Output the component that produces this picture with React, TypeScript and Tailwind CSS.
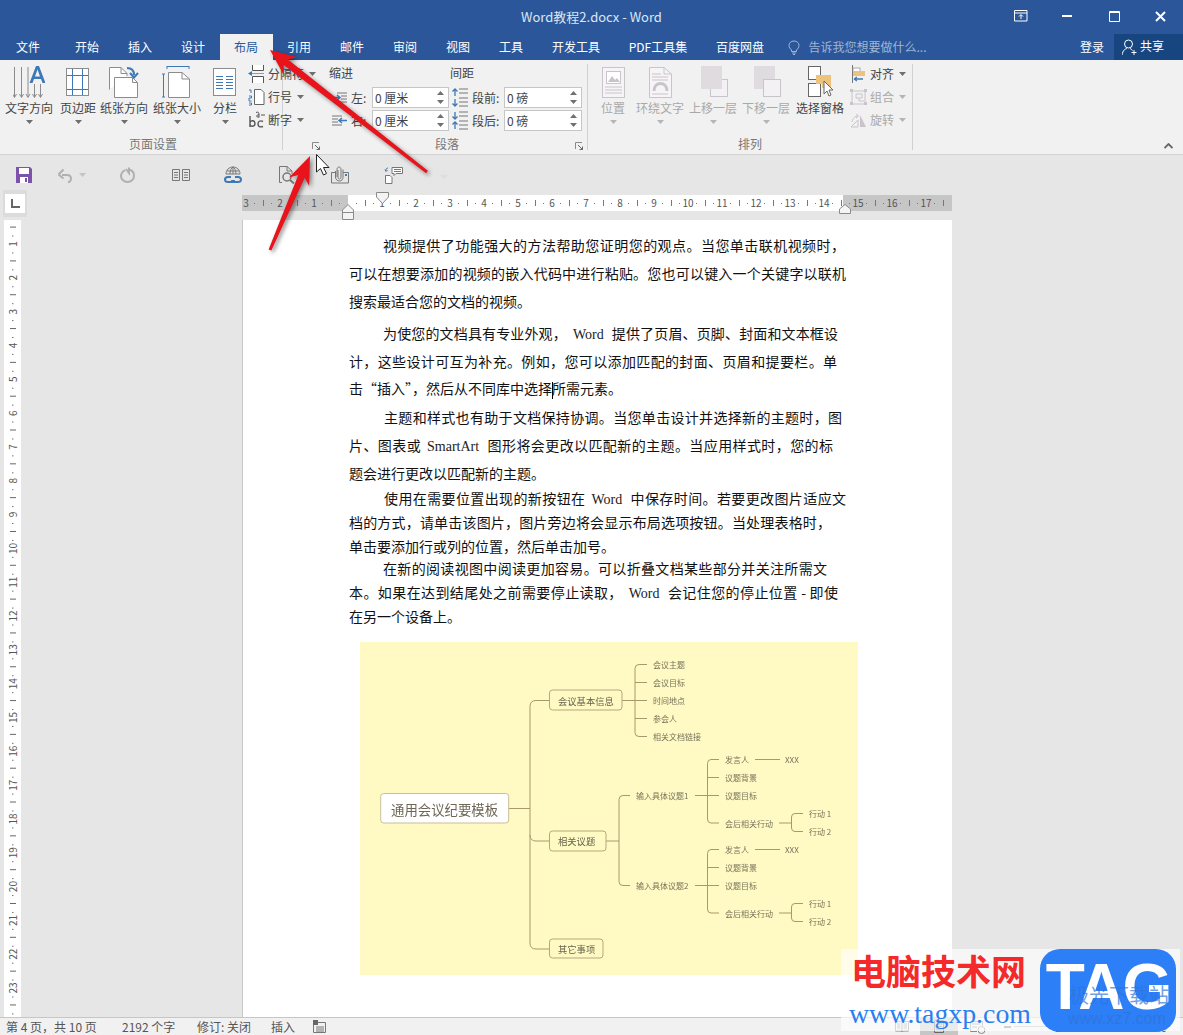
import React from "react";

const G = "#8c8c8c";
const B = "#3f79b5";
const D = "#c9c4c9";

function Caret({ c = "#6f6f6f" }: { c?: string }) {
  return (
    <svg width="7" height="4" viewBox="0 0 7 4" className="shrink-0">
      <path d="M0 0H7L3.5 4Z" fill={c} />
    </svg>
  );
}

function LargeBtn({ label, w, icon, off }: { label: string; w: string; icon: React.ReactNode; off?: boolean }) {
  return (
    <div className={`flex flex-col items-center shrink-0 pt-[2px] ${w}`}>
      <div className="w-[32px] h-[32px]">{icon}</div>
      <div className={`mt-[2px] h-[16px] leading-[16px] text-[12px] whitespace-nowrap ${off ? "text-[#a9a9a9]" : "text-[#444444]"}`}>{label}</div>
      <div className="mt-[4px]"><Caret c={off ? "#b5b5b5" : "#6f6f6f"} /></div>
    </div>
  );
}

function SmallBtn({ label, icon, off }: { label: string; icon: React.ReactNode; off?: boolean }) {
  return (
    <div className="flex items-center h-[20px] whitespace-nowrap">
      <div className="w-[17px] h-[18px]">{icon}</div>
      <span className={`ml-[3px] text-[12px] leading-[20px] ${off ? "text-[#a9a9a9]" : "text-[#444444]"}`}>{label}</span>
      <span className="ml-[5px]"><Caret c={off ? "#b5b5b5" : "#6f6f6f"} /></span>
    </div>
  );
}

function Launcher() {
  return (
    <svg width="8" height="8" viewBox="0 0 8 8">
      <path d="M0.5 7V0.5H7" fill="none" stroke="#8a8a8a" />
      <path d="M3 3L7.5 7.5M7.5 4.5V7.5H4.5" fill="none" stroke="#6a6a6a" />
    </svg>
  );
}

function Spin({ value, w }: { value: string; w: string }) {
  return (
    <div className={`h-[21px] bg-white border border-[#c6c6c6] flex items-center justify-between pl-[2px] pr-[4px] ${w}`}>
      <span className="text-[12px] text-[#444444]">{value}</span>
      <div className="flex flex-col gap-[5px]">
        <svg width="7" height="4" viewBox="0 0 7 4"><path d="M0 4H7L3.5 0Z" fill="#707070" /></svg>
        <Caret c="#707070" />
      </div>
    </div>
  );
}

const IconTextDir = (
  <svg viewBox="0 0 32 32" width="32" height="32">
    <g stroke={G} fill="none">
      <path d="M1.5 1V31M8.5 1V31M15 1V31M21.5 18V31M27.5 18V31" />
      <path d="M-.5 28L1.5 31.5L3.5 28M6.5 28L8.5 31.5L10.5 28M13 28L15 31.5L17 28M19.5 28L21.5 31.5L23.5 28M25.5 28L27.5 31.5L29.5 28" />
    </g>
    <path d="M16.5 17L23 0H26L32.5 17H29.5L28 13H21L19.5 17ZM22 10.5H27L24.5 3.5Z" fill={B} />
  </svg>
);
const IconMargins = (
  <svg viewBox="0 0 32 32" width="32" height="32">
    <rect x="4.5" y="2.5" width="22" height="27" fill="#fff" stroke={G} />
    <path d="M10.5 3V29M20.5 3V29M5 9.5H26M5 23.5H26" stroke={B} fill="none" />
  </svg>
);
const IconOrient = (
  <svg viewBox="0 0 32 32" width="32" height="32">
    <path d="M1.5 23.5V1.5H13L19 7.5V10" fill="#fff" stroke={G} />
    <path d="M13 1.5V7.5H19" fill="none" stroke={G} />
    <path d="M6.5 31.5V11.5H24.5L29.5 16.5V31.5Z" fill="#fff" stroke={G} />
    <path d="M24.5 11.5V16.5H29.5" fill="none" stroke={G} />
    <path d="M19 2C23 2 26 4 26 9" fill="none" stroke={B} strokeWidth="2" />
    <path d="M22 7L26 11.5L30 7" fill="none" stroke={B} strokeWidth="2" />
  </svg>
);
const IconSize = (
  <svg viewBox="0 0 32 32" width="32" height="32">
    <path d="M4 .5H26M4 0V3M26 0V3M.5 8V31M-1 8H2M-1 31H2" transform="translate(2 0)" stroke={B} fill="none" />
    <path d="M7.5 31.5V6.5H21L28.5 13V31.5Z" fill="#fff" stroke={G} />
    <path d="M21 6.5V13H28.5" fill="none" stroke={G} />
  </svg>
);
const IconCols = (
  <svg viewBox="0 0 32 32" width="32" height="32">
    <rect x="4.5" y="2.5" width="22" height="27" fill="#fff" stroke={G} />
    <path d="M7 10.5H14M17 10.5H24M7 13.5H14M17 13.5H24M7 16.5H14M17 16.5H24M7 19.5H14M17 19.5H24M7 22.5H14M17 22.5H24" stroke={B} />
  </svg>
);
const IconBreak = (
  <svg viewBox="0 0 17 18" width="17" height="18">
    <path d="M4.5 0V5.5H15.5V0M4.5 18V11.5H15.5V18" fill="#fff" stroke="#555" />
    <path d="M0 8.5L4 6V11Z" fill={B} />
    <path d="M4 8.5H16" stroke="#9a9a9a" />
  </svg>
);
const IconLines = (
  <svg viewBox="0 0 17 18" width="17" height="18">
    <path d="M6.5 1.5H13L16 4.5V16.5H6.5Z" fill="#fff" stroke="#666" />
    <path d="M1 2H3V5M1 8H3.5V10H1V13H3.5M1 15H3.5V17H1" fill="none" stroke={B} />
  </svg>
);
const IconHyphen = (
  <svg viewBox="0 0 17 18" width="17" height="18">
    <path d="M2 5V16M2 12C2 9 7 9 7 12.5S2 16 2 13" fill="none" stroke="#555" strokeWidth="1.4" />
    <path d="M15 10.5C12 9 10 10.5 10 13S12 16.5 15 15.5" fill="none" stroke="#555" strokeWidth="1.4" />
    <path d="M8 1.5C10 0.5 11 1.5 11 3V6.5M11 4C8 3.5 7.5 6.5 11 6M13 4H17" fill="none" stroke="#555" />
  </svg>
);
const IconPos = (
  <svg viewBox="0 0 32 32" width="32" height="32">
    <rect x="5.5" y="1.5" width="22" height="30" fill="#f7f4f7" stroke={D} />
    <rect x="9.5" y="5.5" width="14" height="12" fill="#fff" stroke={D} />
    <path d="M11 16L15 10L18 14L20 12L23 16Z" fill={D} />
    <path d="M8 21H25M8 24H25M8 27H25" stroke={D} />
  </svg>
);
const IconWrap = (
  <svg viewBox="0 0 32 32" width="32" height="32">
    <path d="M5.5 1.5H20L27.5 8V31.5H5.5Z" fill="#f7f4f7" stroke={D} />
    <path d="M20 1.5V8H27.5" fill="none" stroke={D} />
    <path d="M8 8H17M8 11H24M8 14H24M8 28H24" stroke={D} />
    <path d="M10 25C10 15 23 15 23 25" fill="none" stroke={D} strokeWidth="3" />
  </svg>
);
const IconForward = (
  <svg viewBox="0 0 32 32" width="32" height="32">
    <rect x="13.5" y="13.5" width="17" height="17" fill="#f4f1f4" stroke={D} />
    <rect x="4" y="0" width="21" height="23" fill="#dfdbdf" />
  </svg>
);
const IconBackward = (
  <svg viewBox="0 0 32 32" width="32" height="32">
    <rect x="4" y="0" width="21" height="23" fill="#dfdbdf" />
    <rect x="13.5" y="13.5" width="17" height="17" fill="#f4f1f4" stroke={D} />
  </svg>
);
const IconPane = (
  <svg viewBox="0 0 32 32" width="32" height="32">
    <rect x="4.5" y="0.5" width="12" height="13" fill="#fff" stroke="#666" />
    <rect x="4.5" y="17.5" width="12" height="13" fill="#fff" stroke="#666" />
    <path d="M12 9H27V22H18V18H12Z" fill="#edc27d" />
    <path d="M20 15V28L23 25L25 30L27 29L25 24H29Z" fill="#fff" stroke="#666" />
  </svg>
);
const IconAlign = (
  <svg viewBox="0 0 17 18" width="17" height="18">
    <path d="M2.5 0V18" stroke="#777" />
    <rect x="3" y="3" width="7" height="4" fill="#fff" stroke="#888" strokeWidth=".7" />
    <rect x="3" y="6" width="12" height="5" fill="#edc27d" />
    <path d="M4 14H13M4 14L7 12M4 14L7 16" stroke={B} fill="none" strokeWidth="1.3" />
  </svg>
);
const IconGroup = (
  <svg viewBox="0 0 17 18" width="17" height="18">
    <path d="M2 3H15V16H2Z" fill="none" stroke={D} />
    <path d="M6 6H12V10H6ZM9 10V13H14" fill="none" stroke={D} />
    <path d="M0 1H3V4H0ZM14 1H17V4H14ZM0 14H3V17H0ZM14 14H17V17H14Z" fill={D} />
  </svg>
);
const IconRotate = (
  <svg viewBox="0 0 17 18" width="17" height="18">
    <path d="M1 16L8 9V16Z" fill="none" stroke={D} />
    <path d="M10 4V16H16Z" fill={D} />
    <path d="M2 11C3 7 5 5 8 5M6 3L8.5 5L6 7" fill="none" stroke={D} />
  </svg>
);
const IconIndL = (
  <svg viewBox="0 0 16 16" width="16" height="16">
    <path d="M5 3H15M9 6H15M9 9H15M5 12H15" stroke="#777" />
    <path d="M0 7.5H7M5 5L8 7.5L5 10" stroke={B} fill="none" strokeWidth="1.5" />
  </svg>
);
const IconIndR = (
  <svg viewBox="0 0 16 16" width="16" height="16">
    <path d="M0 3H10M0 6H6M0 9H6M0 12H10" stroke="#777" />
    <path d="M15 7.5H8M10 5L7 7.5L10 10" stroke={B} fill="none" strokeWidth="1.5" />
  </svg>
);
const IconSpBefore = (
  <svg viewBox="0 0 16 20" width="16" height="20">
    <path d="M7 1H16M7 5H16M7 10H16M7 14H16M7 18H16" stroke="#777" />
    <path d="M3 1V8M0.5 3.5L3 1L5.500 3.500M3 11V18M0.5 15.5L3 18L5.500 15.500" stroke={B} fill="none" strokeWidth="1.3" />
  </svg>
);
const IconSpAfter = (
  <svg viewBox="0 0 16 20" width="16" height="20">
    <path d="M7 1H16M7 5H16M7 10H16M7 14H16M7 18H16" stroke="#777" />
    <path d="M3 1V8M0.5 5.500L3 8L5.500 5.500M3 11V18M0.5 13.500L3 11L5.500 13.500" stroke={B} fill="none" strokeWidth="1.3" />
  </svg>
);

function TitleBar() {
  return (
    <div className="h-[34px] grid grid-cols-[1fr_auto_1fr] items-center text-[#dce6f3]">
      <div />
      <div className="text-[13px]">Word教程2.docx - Word</div>
      <div className="flex items-center justify-end h-full text-white pb-[2px]">
        <svg width="14" height="12" viewBox="0 0 14 12" className="mr-[34px]">
          <path d="M.5.5H13V11H.5ZM.5 3H13" fill="none" stroke="#fff" />
          <path d="M7 9V5M5 6.500L7 4.500L9 6.500" fill="none" stroke="#fff" />
        </svg>
        <div className="w-[10px] h-[2px] bg-white mr-[37px]" />
        <svg width="11" height="11" viewBox="0 0 11 11" className="mr-[35px]">
          <path d="M.5.5H10.500V10.500H.5ZM.5 1.500H10.500" fill="none" stroke="#fff" />
        </svg>
        <svg width="11" height="11" viewBox="0 0 11 11" className="mr-[17px]">
          <path d="M1 1L10 10M10 1L1 10" stroke="#fff" strokeWidth="2" />
        </svg>
      </div>
    </div>
  );
}

function Tab({ label, w, active }: { label: string; w: string; active?: boolean }) {
  return (
    <div className={`h-full flex items-center justify-center text-[12px] ${w} ${active ? "bg-[#f1f1f1] text-[#2b579a]" : "text-white"}`}>
      {label}
    </div>
  );
}

function TabBar() {
  return (
    <div className="h-[26px] flex items-stretch">
      <Tab label="文件" w="w-[56px] mr-[4.500px]" />
      <Tab label="开始" w="w-[53px]" />
      <Tab label="插入" w="w-[53px]" />
      <Tab label="设计" w="w-[53px]" />
      <Tab label="布局" w="w-[53px]" active />
      <Tab label="引用" w="w-[53px]" />
      <Tab label="邮件" w="w-[53px]" />
      <Tab label="审阅" w="w-[53px]" />
      <Tab label="视图" w="w-[53px]" />
      <Tab label="工具" w="w-[53px]" />
      <Tab label="开发工具" w="w-[77px]" />
      <Tab label="PDF工具集" w="w-[87px]" />
      <Tab label="百度网盘" w="w-[77px]" />
      <div className="flex items-center ml-[9px] text-[12px] text-[#9fb5d4]">
        <svg width="12" height="15" viewBox="0 0 12 15" className="mr-[9px]">
          <path d="M3.500 10C2 8.500 1 7.500 1 5.500C1 3 3 1 6 1S11 3 11 5.500C11 7.500 10 8.500 8.500 10V11.500H3.500ZM4 13H8M5 14.500H7" fill="none" stroke="#9fb5d4" />
        </svg>
        <span>告诉我您想要做什么...</span>
      </div>
      <div className="ml-auto flex items-center text-[12px] text-white">
        <span className="mr-[10px]">登录</span>
        <div className="w-[69px] h-full bg-[#17457f] flex items-center pl-[8px] gap-[2px]">
          <svg width="16" height="17" viewBox="0 0 16 17">
            <circle cx="6.500" cy="5" r="4" fill="none" stroke="#fff" />
            <path d="M0 16C1 11 3 10 5 9.500M8 9.500C9 10 10 10.500 10.500 11.500M12 11V16M9.500 13.500H14.500" fill="none" stroke="#fff" />
          </svg>
          <span className="-mt-[3px]">共享</span>
        </div>
      </div>
    </div>
  );
}

function Ribbon() {
  return (
    <div className="h-[95px] bg-[#f1f1f1] border-b border-[#d2d2d2] flex pt-[4px] relative">
      <div className="w-[283px] h-[86px] border-r border-[#d0d0d0] flex flex-col relative shrink-0">
        <div className="h-[73px] flex pl-[4px]">
          <LargeBtn label="文字方向" w="w-[50px]" icon={IconTextDir} />
          <LargeBtn label="页边距" w="w-[48px]" icon={IconMargins} />
          <LargeBtn label="纸张方向" w="w-[44px]" icon={IconOrient} />
          <LargeBtn label="纸张大小" w="w-[62px]" icon={IconSize} />
          <LargeBtn label="分栏" w="w-[34px]" icon={IconCols} />
          <div className="ml-[6px] flex flex-col gap-[3px]">
            <SmallBtn label="分隔符" icon={IconBreak} />
            <SmallBtn label="行号" icon={IconLines} />
            <SmallBtn label="断字" icon={IconHyphen} />
          </div>
        </div>
        <div className="h-[13px] leading-[13px] text-[12px] text-[#777777] pl-[129px]">页面设置</div>
        <div className="absolute left-[312px] top-[78px]"><Launcher /></div>
      </div>
      <div className="w-[305px] h-[86px] border-r border-[#d0d0d0] flex flex-col relative shrink-0">
        <div className="h-[18px] leading-[18px] flex text-[12px] text-[#444444] pl-[46px]">
          <span className="w-[121px]">缩进</span>
          <span>间距</span>
        </div>
        <div className="pt-[5px] flex flex-col gap-[2px] pl-[49px]">
          <div className="flex items-center h-[21px]">
            {IconIndL}
            <span className="ml-[3px] w-[21px] text-[12px] text-[#444444]">左:</span>
            <Spin value="0 厘米" w="w-[77px]" />
            <span className="ml-[3px] w-[16px]">{IconSpBefore}</span>
            <span className="ml-[4px] w-[32px] text-[12px] text-[#444444]">段前:</span>
            <Spin value="0 磅" w="w-[78px]" />
          </div>
          <div className="flex items-center h-[21px]">
            {IconIndR}
            <span className="ml-[3px] w-[21px] text-[12px] text-[#444444]">右:</span>
            <Spin value="0 厘米" w="w-[77px]" />
            <span className="ml-[3px] w-[16px]">{IconSpAfter}</span>
            <span className="ml-[4px] w-[32px] text-[12px] text-[#444444]">段后:</span>
            <Spin value="0 磅" w="w-[78px]" />
          </div>
        </div>
        <div className="mt-auto h-[13px] leading-[13px] text-[12px] text-[#777777] pl-[152px]">段落</div>
        <div className="absolute left-[292px] top-[78px]"><Launcher /></div>
      </div>
      <div className="w-[325px] h-[86px] border-r border-[#d0d0d0] flex flex-col shrink-0">
        <div className="h-[73px] flex pl-[2px]">
          <LargeBtn label="位置" w="w-[46px]" icon={IconPos} off />
          <LargeBtn label="环绕文字" w="w-[48px]" icon={IconWrap} off />
          <LargeBtn label="上移一层" w="w-[58px]" icon={IconForward} off />
          <LargeBtn label="下移一层" w="w-[48px]" icon={IconBackward} off />
          <div className="flex flex-col items-center shrink-0 pt-[2px] w-[60px]">
            <div className="w-[32px] h-[32px]">{IconPane}</div>
            <div className="mt-[2px] h-[16px] leading-[16px] text-[12px] whitespace-nowrap text-[#444444]">选择窗格</div>
          </div>
          <div className="flex flex-col gap-[3px]">
            <SmallBtn label="对齐" icon={IconAlign} />
            <SmallBtn label="组合" icon={IconGroup} off />
            <SmallBtn label="旋转" icon={IconRotate} off />
          </div>
        </div>
        <div className="h-[13px] leading-[13px] text-[12px] text-[#777777] pl-[150px]">排列</div>
      </div>
      <div className="flex-1 flex items-end justify-end pr-[10px] pb-[5px]">
        <svg width="9" height="6" viewBox="0 0 9 6"><path d="M.5 5L4.500 1L8.500 5" fill="none" stroke="#666" strokeWidth="1.800" /></svg>
      </div>
    </div>
  );
}

function Qat() {
  return (
    <div className="h-[39px] flex items-center pl-[16px]">
      <svg width="16" height="16" viewBox="0 0 16 16">
        <path d="M0 0H14L16 2V16H0Z" fill="#7d52ad" />
        <rect x="3" y="1" width="10" height="6" fill="#fff" />
        <rect x="4" y="10" width="8" height="6" fill="#fff" />
        <rect x="9" y="11" width="2" height="4" fill="#7d52ad" />
      </svg>
      <svg width="16" height="16" viewBox="0 0 16 16" className="ml-[25px]">
        <path d="M5 8H10C13 8 14 10 14 12C14 14 13 15 11 15.500M1.500 7.500L6.500 2.500M1.500 7.500L6.500 11.500" fill="none" stroke="#b0b0b0" strokeWidth="2" />
      </svg>
      <span className="ml-[6px]"><Caret c="#c4c4c4" /></span>
      <svg width="16" height="16" viewBox="0 0 16 16" className="ml-[34px]">
        <path d="M5 3C2 5 1 7 1 9C1 12.500 4 15 7.500 15S14 12.500 14 9C14 5.500 12 3 8.500 2.500M9 .5V6L6 2" fill="none" stroke="#b0b0b0" strokeWidth="2" />
      </svg>
      <svg width="18" height="14" viewBox="0 0 18 14" className="ml-[36px]">
        <path d="M.5 1.500H7.500V12.500H.5ZM10.500 1.500H17.500V12.500H10.500ZM2 4.500H6M2 7H6M2 9.500H6M12 4.500H16M12 7H16M12 9.500H16" fill="none" stroke="#777" />
      </svg>
      <svg width="18" height="18" viewBox="0 0 18 18" className="ml-[34px]">
        <path d="M2 8C2 4 5 1 9 1S16 4 16 8M2 8H16M6 8C6 5 7 2 9 1C11 2 12 5 12 8M9 1V8M3 5H15" fill="none" stroke="#777" />
        <path d="M7 11H4C2 11 1 12 1 13.500S2 16 4 16H8C9.500 16 10 15 10 14M11 11H14C16 11 17 12 17 13.500S16 16 14 16H10C8.500 16 8 15 8 14" fill="none" stroke={B} strokeWidth="2" />
      </svg>
      <svg width="18" height="18" viewBox="0 0 18 18" className="ml-[37px]">
        <path d="M3 16.500H.5V.5H8L13 5V8M8 .5V5H13" fill="none" stroke="#777" />
        <circle cx="8" cy="11" r="4" fill="none" stroke="#777" strokeWidth="1.500" />
        <path d="M11 14L15 17.500" stroke="#777" strokeWidth="2" />
      </svg>
      <svg width="18" height="18" viewBox="0 0 18 18" className="ml-[34px]">
        <path d="M.5 6.500H4M12 6.500H17.500V17H.5V6.500" fill="none" stroke="#777" />
        <path d="M6 11V3.500C6 2 7 1 8 1S10 2 10 3.500V11C10 12 9.500 13 8.500 13S7 12 7 11V4M12 3.500V11C12 13.500 10.500 15 8.500 15S4.500 13.500 4.500 11V5" fill="none" stroke="#777" />
        <rect x="14" y="8" width="2" height="2" fill={B} />
      </svg>
      <svg width="20" height="18" viewBox="0 0 20 18" className="ml-[35px]">
        <path d="M1.500 17.500V9.500H6L8 11.500V17.500Z M8 1.500H18.500V7.500H12L10 9.500V7.500H8Z M10 3.500H17M10 5.500H17" fill="#fff" stroke="#777" />
        <path d="M4 2C2.500 2 2 3 2 4.500M1 3.500L2 5.500L3.500 4" fill="none" stroke={B} />
      </svg>
      <span className="ml-[36px]"><svg width="8" height="8" viewBox="0 0 8 8"><path d="M1 1H7M0 4H8L4 8Z" fill="#dedede" stroke="#dedede" strokeWidth=".5" /></svg></span>
    </div>
  );
}

function HRuler() {
  const marks: React.ReactNode[] = [];
  for (let n = -3; n <= 17; n++) {
    const x = 106 + 34 * n;
    if (n !== 0) {
      marks.push(
        <text key={`n${n}`} x={x} y="13" fontSize="10" textAnchor="middle" fill="#555">
          {Math.abs(n)}
        </text>
      );
    }
    if (x + 17 < 708) marks.push(<path key={`h${n}`} d={`M${x + 17.5} 6V12`} stroke="#777" />);
    if (x + 8.5 < 708) marks.push(<rect key={`a${n}`} x={x + 8} y="9" width="1" height="1" fill="#777" />);
    if (x + 25.5 < 708) marks.push(<rect key={`b${n}`} x={x + 25} y="9" width="1" height="1" fill="#777" />);
  }
  return (
    <svg width="711" height="26" viewBox="0 0 711 26" className="overflow-visible">
      <rect x="0" y="1" width="106" height="16" fill="#c6c6c6" />
      <rect x="106" y="1" width="495" height="16" fill="#fff" />
      <rect x="601" y="1" width="109" height="16" fill="#c6c6c6" />
      {marks}
      <path d="M134.500 -1.500H146.500V3L140.500 9.500L134.500 3Z" fill="#f4f4f4" stroke="#8a8a8a" />
      <path d="M100.500 25.500V16L106 10.500L111.500 16V25.500ZM100.500 18.500H111.500" fill="#f4f4f4" stroke="#8a8a8a" />
      <path d="M597.500 19.500V15L603 10.500L608.500 15V19.500Z" fill="#f4f4f4" stroke="#8a8a8a" />
    </svg>
  );
}

function VRuler() {
  const marks: React.ReactNode[] = [];
  const u = 33.82;
  for (let n = 0; n <= 24; n++) {
    const y = -10 + 34 + (n - 1) * u;
    if (n > 0 && n < 24) {
      marks.push(
        <text key={`t${n}`} x="8.500" y={y} fontSize="10" textAnchor="middle" dominantBaseline="central" fill="#555" transform={`rotate(-90 8.500 ${y})`}>
          {n}
        </text>
      );
    }
    const h = y - u / 2;
    if (h > 0) marks.push(<path key={`l${n}`} d={`M6 ${h}H12`} stroke="#666" />);
    marks.push(<rect key={`c${n}`} x="8" y={h + u / 4} width="1.500" height="1" fill="#777" />);
    if (h - u / 4 > 0) marks.push(<rect key={`d${n}`} x="8" y={h - u / 4} width="1.500" height="1" fill="#777" />);
  }
  return (
    <svg width="17" height="797" viewBox="0 0 17 797" className="bg-white">
      {marks}
    </svg>
  );
}

type MapText = { x: number; y: number; t: string };

function MindMap() {
  const p = [
    "M149 168.500H170",
    "M189 60.500H176Q170 60.500 170 66.500V303Q170 309 176 309H189",
    "M170 195Q170 201 176 201H189",
    "M262 60.500H287",
    "M287 24.500H279Q275 24.500 275 28.500V92.500Q275 96.500 279 96.500H287",
    "M275 42.500H287M275 78.500H287",
    "M246 201H259",
    "M270 155.500H263Q259 155.500 259 159.500V241.500Q259 245.500 263 245.500H270",
  ];
  for (const o of [0, 90]) {
    p.push(`M335 ${155.5 + o}H359`);
    p.push(`M359 ${119.5 + o}H351Q347.500 ${119.5 + o} 347.500 ${123.5 + o}V${179 + o}Q347.500 ${183 + o} 351 ${183 + o}H359`);
    p.push(`M347.500 ${137.5 + o}H359`);
    p.push(`M395 ${119.5 + o}H420`);
    p.push(`M419 ${183 + o}H431.500`);
    p.push(`M443 ${173.5 + o}H435Q431.500 ${173.5 + o} 431.500 ${177 + o}V${188 + o}Q431.500 ${191.5 + o} 435 ${191.5 + o}H443`);
  }
  const leaf: MapText[] = [
    { x: 293, y: 24.5, t: "会议主题" },
    { x: 293, y: 42.5, t: "会议目标" },
    { x: 293, y: 60.5, t: "时间地点" },
    { x: 293, y: 78.5, t: "参会人" },
    { x: 293, y: 96.5, t: "相关文档链接" },
  ];
  for (const [o, n] of [[0, 1], [90, 2]]) {
    leaf.push(
      { x: 276, y: 155.5 + o, t: `输入具体议题${n}` },
      { x: 365, y: 119.5 + o, t: "发言人" },
      { x: 425, y: 119.5 + o, t: "XXX" },
      { x: 365, y: 137.5 + o, t: "议题背景" },
      { x: 365, y: 155.5 + o, t: "议题目标" },
      { x: 365, y: 183 + o, t: "会后相关行动" },
      { x: 449, y: 173.5 + o, t: "行动 1" },
      { x: 449, y: 191.5 + o, t: "行动 2" }
    );
  }
  return (
    <svg width="498" height="333" viewBox="0 2 498 333" className="block blur-[0.4px] bg-[#fff9c4]">
      <path d={p.join("")} fill="none" stroke="#a8996b" strokeWidth="1" />
      <rect x="20.700" y="153.500" width="128" height="29.500" rx="3" fill="#fff" stroke="#c9bf95" />
      <rect x="189.500" y="50" width="72.500" height="20" rx="3" fill="#fff9c4" stroke="#b5a97a" />
      <rect x="189.500" y="191" width="56.500" height="20" rx="3" fill="#fff9c4" stroke="#b5a97a" />
      <rect x="189.500" y="299" width="53.500" height="19" rx="3" fill="#fff9c4" stroke="#b5a97a" />
      <text x="31" y="168.500" fontSize="13.400" dominantBaseline="central" fill="#6e6654">通用会议纪要模板</text>
      <text x="198" y="60.500" fontSize="9.300" dominantBaseline="central" fill="#66634c">会议基本信息</text>
      <text x="198" y="201" fontSize="9.300" dominantBaseline="central" fill="#66634c">相关议题</text>
      <text x="198" y="309" fontSize="9.300" dominantBaseline="central" fill="#66634c">其它事项</text>
      {leaf.map((l, i) => (
        <text key={i} x={l.x} y={l.y} fontSize="8" dominantBaseline="central" fill="#77745a">{l.t}</text>
      ))}
    </svg>
  );
}

function L({ c, children }: { c: string; children: React.ReactNode }) {
  return <div className={`whitespace-nowrap ${c}`}>{children}</div>;
}

const W = ({ children }: { children: React.ReactNode }) => (
  <span className="[font-family:'Liberation_Serif',serif] leading-none ml-[6px] mr-[8px] text-[#222222]">{children}</span>
);

const J = "[text-align:justify] [text-align-last:justify] whitespace-normal";

function Page() {
  return (
    <div className="w-[710px] h-full bg-white border-l border-[#c6c6c6] pl-[106px] pt-[11px] text-[14px] text-[#111111] shrink-0">
      <div className="leading-[28px]">
        <L c={`${J} ml-[34px] w-[462px]`}>视频提供了功能强大的方法帮助您证明您的观点。当您单击联机视频时，</L>
        <L c={`${J} w-[497px]`}>可以在想要添加的视频的嵌入代码中进行粘贴。您也可以键入一个关键字以联机</L>
        <L c="">搜索最适合您的文档的视频。</L>
      </div>
      <div className="leading-[27.500px] mt-[5px]">
        <L c={`${J} ml-[34px] w-[455px]`}>为使您的文档具有专业外观，<W>Word</W>提供了页眉、页脚、封面和文本框设</L>
        <L c={`${J} w-[488px]`}>计，这些设计可互为补充。例如，您可以添加匹配的封面、页眉和提要栏。单</L>
        <L c="">
          击“插入”，然后从不同库中选择
          <span className="inline-block w-px h-[17px] bg-black align-middle -mx-[0.5px]" />
          所需元素。
        </L>
      </div>
      <div className="leading-[28px]">
        <L c={`${J} ml-[35px] w-[458px]`}>主题和样式也有助于文档保持协调。当您单击设计并选择新的主题时，图</L>
        <L c={`${J} w-[484px]`}>片、图表或<W>SmartArt</W>图形将会更改以匹配新的主题。当应用样式时，您的标</L>
        <L c="">题会进行更改以匹配新的主题。</L>
      </div>
      <div className="leading-[24px] -mt-[1px]">
        <L c={`${J} ml-[35px] w-[462px]`}>使用在需要位置出现的新按钮在<W>Word</W>中保存时间。若要更改图片适应文</L>
        <L c={`${J} w-[482px]`}>档的方式，请单击该图片，图片旁边将会显示布局选项按钮。当处理表格时，</L>
        <L c="">单击要添加行或列的位置，然后单击加号。</L>
      </div>
      <div className="leading-[24px] -mt-[2px]">
        <L c={`${J} ml-[34px] w-[444px]`}>在新的阅读视图中阅读更加容易。可以折叠文档某些部分并关注所需文</L>
        <L c={`${J} w-[489px]`}>本。如果在达到结尾处之前需要停止读取，<W>Word</W>会记住您的停止位置 - 即使</L>
        <L c="">在另一个设备上。</L>
      </div>
      <div className="mt-[14px] ml-[11px]">
        <MindMap />
      </div>
    </div>
  );
}

function StatusBar() {
  return (
    <div className="h-[18px] bg-[#f1f1f1] border-t border-[#c6c6c6] flex items-center text-[12px] text-[#555555] pl-[6px]">
      <span className="w-[116px]">第 4 页，共 10 页</span>
      <span className="w-[75px]">2192 个字</span>
      <span className="w-[74px]">修订: 关闭</span>
      <span className="w-[42px]">插入</span>
      <svg width="13" height="13" viewBox="0 0 13 13">
        <rect x="0" y="0" width="5" height="5" fill="#666" />
        <path d="M5 2.500H12.500V12.500H.5V5M3 7H11M3 9H11M3 11H11" fill="none" stroke="#777" />
      </svg>
      <div className="ml-[569px] flex items-center h-full">
        <svg width="14" height="13" viewBox="0 0 14 13">
          <path d="M.5 1.500H6.500L7 2.500L7.500 1.500H13.500V11H7.500L7 12L6.500 11H.5ZM7 2.500V11M2 4H5.500M2 6H5.500M2 8H5.500M8.500 4H12M8.500 6H12M8.500 8H12" fill="none" stroke="#888" />
        </svg>
        <div className="ml-[11px] w-[38px] h-full bg-[#c6c6c6] flex items-center justify-center">
          <svg width="14" height="13" viewBox="0 0 14 13">
            <path d="M2.500.5H11.500V12.500H2.500ZM4 4H10M4 6.500H10M4 9H10" fill="none" stroke="#666" />
          </svg>
        </div>
        <svg width="16" height="14" viewBox="0 0 16 14" className="ml-[12px]">
          <path d="M.5 1.500H12.500V6M.5 1.500V11.500H7M2 4H10M2 7H7" fill="none" stroke="#888" />
          <circle cx="11.500" cy="10" r="3.500" fill="none" stroke="#888" />
        </svg>
        <div className="ml-[18px] w-[7px] h-[2px] bg-[#777777]" />
        <div className="ml-[3px] w-[102px] h-px bg-[#b5b5b5] relative">
          <div className="absolute left-[42px] -top-[6px] w-[4px] h-[12px] bg-[#555555]" />
        </div>
        <svg width="9" height="9" viewBox="0 0 9 9" className="ml-[3px]"><path d="M4.500 0V9M0 4.500H9" stroke="#777" strokeWidth="1.500" /></svg>
        <span className="ml-[14px]">90%</span>
      </div>
    </div>
  );
}

function Overlay() {
  return (
    <svg width="1183" height="1035" viewBox="0 0 1183 1035" className="absolute left-0 top-0 pointer-events-none">
      <path d="M316.500 154.500V172L320.500 168.500L323.500 175L326.500 173.500L323.500 167.500H329Z" fill="#fff" stroke="#222" />
      <g fill="#e8131b" className="drop-shadow-[2px_2px_2px_rgba(0,0,0,0.45)]">
        <polygon points="270,50 297.300,57.300 287.900,59.500 427.900,170.800 426.100,173.200 283.700,65.100 283.700,74.700" />
        <polygon points="310,156 309.200,186.100 304.700,177.700 271.400,250.600 268.600,249.400 298.300,174.900 289,177.500" />
      </g>
    </svg>
  );
}

function Watermark() {
  return (
    <div className="absolute left-[841px] top-[949px] w-[339px] h-[82px] bg-white/65 flex">
      <div className="w-[199px] flex flex-col">
        <div className="ml-[10px] h-[40px] leading-[40px] text-[35px] font-bold text-[#f42a2a] whitespace-nowrap mt-[1px]">电脑技术网</div>
        <div className="mt-[11px] ml-[8px] h-[26px] leading-[26px] text-[27.800px] text-[#2a7ff0] whitespace-nowrap [font-family:'Liberation_Serif',serif]">www.tagxp.com</div>
      </div>
      <div className="w-[136px] h-[83px] rounded-[20px] bg-[#2c7ff7] relative overflow-hidden">
        <div className="absolute left-0 right-0 top-[2px] text-center text-white font-bold text-[64px] leading-[72px] tracking-[-2px] [font-family:'Liberation_Sans',sans-serif]">TAG</div>
        <div className="absolute left-[29px] top-[33px] text-[20px] leading-[26px] text-[#2f74d8]/70 whitespace-nowrap">极光下载站</div>
        <div className="absolute left-[28px] top-[60px] text-[16px] leading-[20px] text-[#2f74d8]/80 whitespace-nowrap [font-family:'Liberation_Sans',sans-serif]">www.xz7.com</div>
      </div>
    </div>
  );
}

export default function App() {
  return (
    <div className="relative w-[1183px] h-[1035px] overflow-hidden flex flex-col bg-[#e6e6e6] [font-family:'Noto_Sans_CJK_SC','Liberation_Sans',sans-serif]">
      <div className="bg-[#2b579a]">
        <TitleBar />
        <TabBar />
      </div>
      <Ribbon />
      <Qat />
      <div className="h-[26px] flex">
        <div className="ml-[3px] -mt-[4px] w-[24px] h-[27px] bg-[#dcdcdc] flex items-center justify-center">
          <div className="w-[20px] h-[19px] bg-white flex items-center justify-center">
            <svg width="9" height="9" viewBox="0 0 9 9"><path d="M1 0V8H9" fill="none" stroke="#666" strokeWidth="2" /></svg>
          </div>
        </div>
        <div className="ml-[215px]"><HRuler /></div>
      </div>
      <div className="flex-1 min-h-0 flex">
        <div className="ml-[4px] w-[17px] shrink-0 overflow-hidden"><VRuler /></div>
        <div className="ml-[221px] h-full"><Page /></div>
      </div>
      <StatusBar />
      <Watermark />
      <Overlay />
    </div>
  );
}
